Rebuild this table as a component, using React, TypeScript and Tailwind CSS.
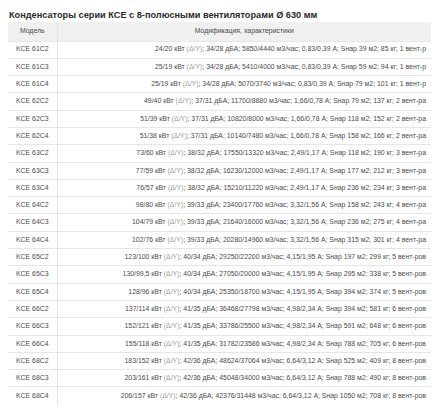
const rows: [string, string][] = [
  ["KCE 61C2", "24/20 кВт |; 34/28 дБА; 5850/4440 м3/час; 0,83/0,39 А; Sнар 39 м2; 85 кг; 1 вент-р"],
  ["KCE 61C3", "25/19 кВт |; 34/28 дБА; 5410/4000 м3/час; 0,83/0,39 А; Sнар 59 м2; 94 кг; 1 вент-р"],
  ["KCE 61C4", "25/19 кВт |; 34/28 дБА; 5070/3740 м3/час; 0,83/0,39 А; Sнар 79 м2; 101 кг; 1 вент-р"],
  ["KCE 62C2", "49/40 кВт |; 37/31 дБА; 11700/8880 м3/час; 1,66/0,78 А; Sнар 79 м2; 137 кг; 2 вент-ра"],
  ["KCE 62C3", "51/39 кВт |; 37/31 дБА; 10820/8000 м3/час; 1,66/0,78 А; Sнар 118 м2; 152 кг; 2 вент-ра"],
  ["KCE 62C4", "51/38 кВт |; 37/31 дБА; 10140/7480 м3/час; 1,66/0,78 А; Sнар 158 м2; 166 кг; 2 вент-ра"],
  ["KCE 63C2", "73/60 кВт |; 38/32 дБА; 17550/13320 м3/час; 2,49/1,17 А; Sнар 118 м2; 190 кг; 3 вент-ра"],
  ["KCE 63C3", "77/59 кВт |; 38/32 дБА; 16230/12000 м3/час; 2,49/1,17 А; Sнар 177 м2; 212 кг; 3 вент-ра"],
  ["KCE 63C4", "76/57 кВт |; 38/32 дБА; 15210/11220 м3/час; 2,49/1,17 А; Sнар 236 м2; 234 кг; 3 вент-ра"],
  ["KCE 64C2", "98/80 кВт |; 39/33 дБА; 23400/17760 м3/час; 3,32/1,56 А; Sнар 158 м2; 243 кг; 4 вент-ра"],
  ["KCE 64C3", "104/79 кВт |; 39/33 дБА; 21640/16000 м3/час; 3,32/1,56 А; Sнар 236 м2; 275 кг; 4 вент-ра"],
  ["KCE 64C4", "102/76 кВт |; 39/33 дБА; 20280/14960 м3/час; 3,32/1,56 А; Sнар 315 м2; 301 кг; 4 вент-ра"],
  ["KCE 65C2", "123/100 кВт |; 40/34 дБА; 29250/22200 м3/час; 4,15/1,95 А; Sнар 197 м2; 299 кг; 5 вент-ров"],
  ["KCE 65C3", "130/99,5 кВт |; 40/34 дБА; 27050/20000 м3/час; 4,15/1,95 А; Sнар 295 м2; 338 кг; 5 вент-ров"],
  ["KCE 65C4", "128/96 кВт |; 40/34 дБА; 25350/18700 м3/час; 4,15/1,95 А; Sнар 394 м2; 374 кг; 5 вент-ров"],
  ["KCE 66C2", "137/114 кВт |; 41/35 дБА; 36468/27798 м3/час; 4,98/2,34 А; Sнар 394 м2; 581 кг; 6 вент-ров"],
  ["KCE 66C3", "152/121 кВт |; 41/35 дБА; 33786/25500 м3/час; 4,98/2,34 А; Sнар 591 м2; 648 кг; 6 вент-ров"],
  ["KCE 66C4", "155/118 кВт |; 41/35 дБА; 31782/23586 м3/час; 4,98/2,34 А; Sнар 788 м2; 705 кг; 6 вент-ров"],
  ["KCE 68C2", "183/152 кВт |; 42/36 дБА; 48624/37064 м3/час; 6,64/3,12 А; Sнар 525 м2; 409 кг; 8 вент-ров"],
  ["KCE 68C3", "203/161 кВт |; 42/36 дБА; 45048/34000 м3/час; 6,64/3,12 А; Sнар 788 м2; 490 кг; 8 вент-ров"],
  ["KCE 68C4", "206/157 кВт |; 42/36 дБА; 42376/31448 м3/час; 6,64/3,12 А; Sнар 1050 м2; 708 кг; 8 вент-ров"],
]

// "|" marks where the light (Δ/Y) note sits
function Spec({ text }: { text: string }) {
  const [before, after] = text.split("|")
  return (
    <>
      {before}
      <span className="text-[#9a9a9a]">(Δ/Y)</span>
      {after}
    </>
  )
}

export default function App() {
  return (
    <div className="min-h-[414px] w-[440px] bg-white pl-2 pt-[10px] font-['Liberation_Sans',Arial,sans-serif]">
      <h1 className="pl-px text-[9.2px] font-bold leading-[11px] text-[#2b2b2b]">
        Конденсаторы серии КСЕ с 8-полюсными вентиляторами Ø 630 мм
      </h1>
      <table className="mt-[1px] w-[423px] border-collapse text-[6.9px] text-[#4a4a4a]">
        <thead>
          <tr className="h-[19px] bg-[#f0f0f0]">
            <th className="w-[49px] border-r border-[#e4e4e4] text-center font-normal">Модель</th>
            <th className="text-center font-normal">Модификация, характеристики</th>
          </tr>
        </thead>
        <tbody>
          {rows.map(([model, spec]) => (
            <tr key={model} className="h-[17.3px] border-t border-[#e6e6e6]">
              <td className="border-r border-[#e4e4e4] text-center">{model}</td>
              <td className="whitespace-nowrap pr-[5px] text-right">
                <Spec text={spec} />
              </td>
            </tr>
          ))}
        </tbody>
      </table>
    </div>
  )
}
